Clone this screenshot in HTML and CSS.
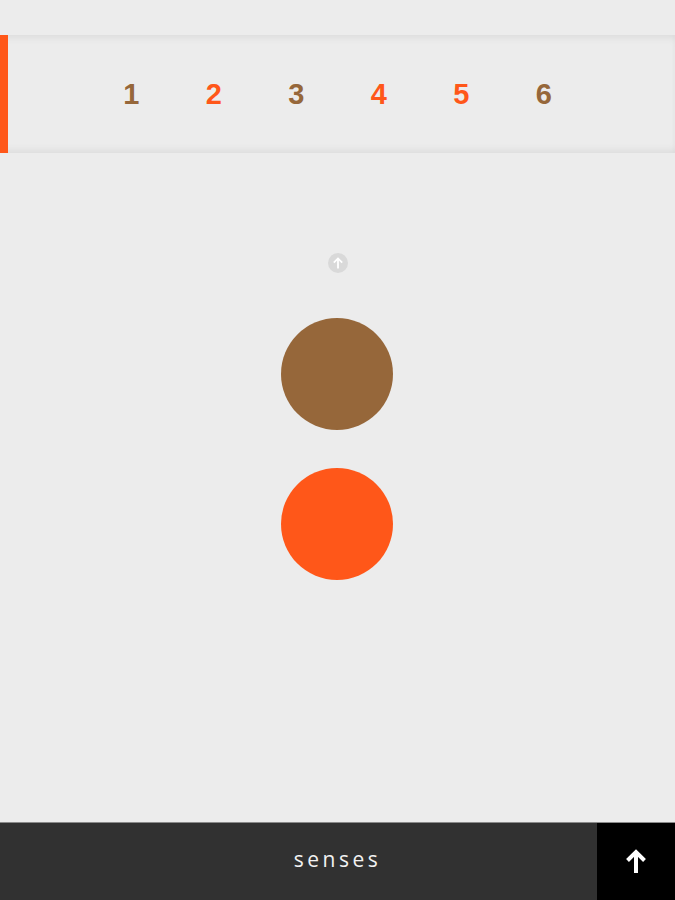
FILE: index.html
```html
<!DOCTYPE html>
<html>
<head>
<meta charset="utf-8">
<link rel="stylesheet" href="styles.css">
</head>
<body>
<div class="page">
  <div class="top-gap"></div>
  <nav class="band">
    <span class="num brown">1</span>
    <span class="num orange">2</span>
    <span class="num brown">3</span>
    <span class="num orange">4</span>
    <span class="num orange">5</span>
    <span class="num brown">6</span>
  </nav>
  <main class="main">
    <div class="mini-up">
      <svg width="20" height="20" viewBox="0 0 20 20"><circle cx="10" cy="10" r="10" fill="#d9d9d9"/><path d="M10 15.5V5.5M5.8 9.6L10 5.4l4.2 4.2" stroke="#fff" stroke-width="1.8" fill="none"/></svg>
    </div>
    <div class="dot dot-brown"></div>
    <div class="dot dot-orange"></div>
  </main>
  <footer class="footer">
    <div class="label">senses</div>
    <div class="up-btn">
      <svg width="22" height="26" viewBox="0 0 22 26"><path d="M11 25V4M2.5 12.5L11 4l8.5 8.5" stroke="#fff" stroke-width="4" fill="none" stroke-linejoin="miter"/></svg>
    </div>
  </footer>
</div>
</body>
</html>
```
FILE: styles.css
```css
html, body {
  margin: 0;
  padding: 0;
  background: #ececec;
}
.page {
  width: 675px;
  height: 900px;
  display: flex;
  flex-direction: column;
  overflow: hidden;
}
.top-gap {
  height: 35px;
  flex: none;
}
.band {
  height: 118px;
  flex: none;
  display: flex;
  justify-content: center;
  align-items: center;
  background: #ececec;
  box-shadow: inset 8px 0 0 #ff5719, inset 0 6px 8px -4px rgba(0,0,0,0.08), inset 0 -6px 8px -4px rgba(0,0,0,0.08);
}
.num {
  width: 82.5px;
  text-align: center;
  font-family: "Liberation Sans", Arial, sans-serif;
  font-weight: bold;
  font-size: 29px;
  line-height: 1;
}
.brown { color: #96673a; }
.orange { color: #ff5719; }
.main {
  flex: 1;
  display: flex;
  flex-direction: column;
  align-items: center;
  padding-top: 100px;
}
.mini-up {
  width: 20px;
  height: 20px;
  margin-left: 1px;
}
.mini-up svg { display: block; }
.dot {
  width: 112px;
  height: 112px;
  border-radius: 50%;
  margin-right: 1px;
}
.dot-brown {
  background: #96673a;
  margin-top: 45px;
}
.dot-orange {
  background: #ff5719;
  margin-top: 38px;
}
.footer {
  height: 78px;
  flex: none;
  display: flex;
  background: #313131;
  border-top: 1px solid #8a8a8a;
  box-sizing: border-box;
}
.label {
  flex: 1;
  padding-left: 78px;
  display: flex;
  align-items: center;
  justify-content: center;
  color: #f2f2f2;
  font-family: "Open Sans", sans-serif;
  font-size: 21px;
  letter-spacing: 3.5px;
  padding-bottom: 6px;
}
.up-btn {
  width: 78px;
  background: #000;
  display: flex;
  align-items: center;
  justify-content: center;
  padding-bottom: 2px;
}
.up-btn svg { display: block; }
```
